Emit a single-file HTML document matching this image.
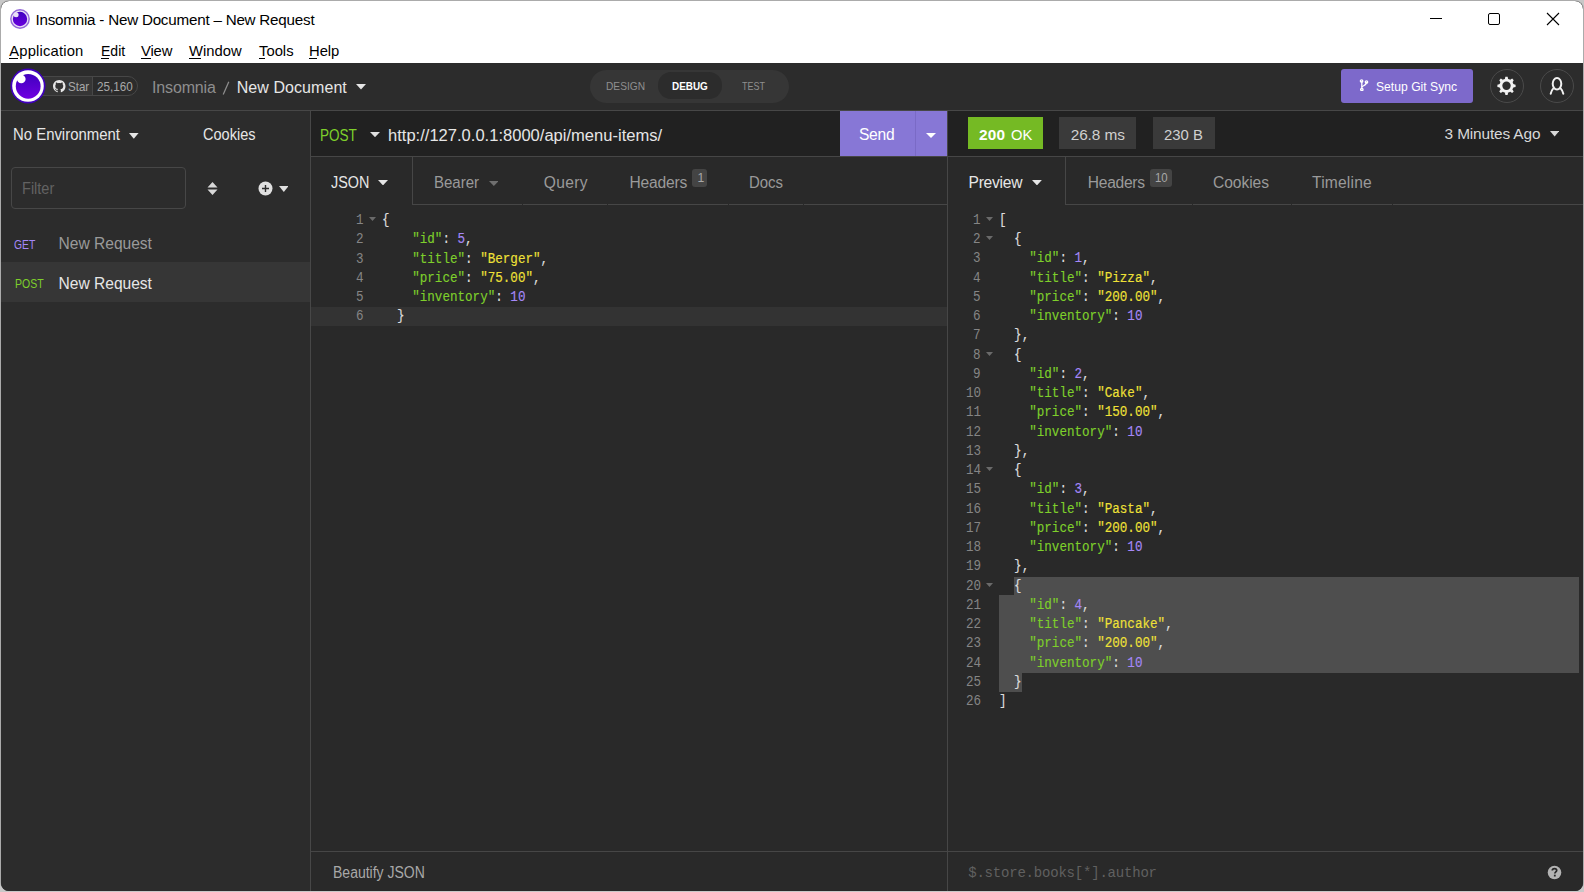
<!DOCTYPE html>
<html><head><meta charset="utf-8">
<style>
*{box-sizing:border-box;margin:0;padding:0}
html,body{width:1584px;height:892px;overflow:hidden;background:#c8c8c8;font-family:"Liberation Sans",sans-serif}
#win{position:absolute;left:0;top:0;width:1584px;height:892px;clip-path:inset(1px 1px 1px 1px round 8px);background:#2c2c2c}
#frame{position:absolute;left:0;top:0;width:1584px;height:891px;background:#ababab;border-radius:9px}
.b{position:absolute}
.t{position:absolute;white-space:pre;line-height:1}
.code{font-family:"Liberation Mono",monospace;font-size:14px;transform:scaleX(0.8987);transform-origin:0 0;color:#ddd;-webkit-text-stroke:0.15px currentColor}
.k{color:#7ecf2b}.s{color:#f0e137}.n{color:#a588f8}.p{color:#dddddd}
</style></head><body>
<div id="frame"></div><div id="win">
<div class="b" style="left:1px;top:1px;width:1582px;height:62px;background:#fff;border-radius:8px 8px 0 0"></div>
<svg class="b" style="left:10px;top:9px" width="20" height="20" viewBox="0 0 20 20">
<defs><linearGradient id="lg1" x1="0" y1="0" x2="0" y2="1"><stop offset="0" stop-color="#4000c0"/><stop offset="1" stop-color="#6a00dd"/></linearGradient></defs>
<circle cx="10" cy="10" r="9.9" fill="#9468d8"/><circle cx="10" cy="10" r="8.5" fill="#e9dff6"/><circle cx="10" cy="10" r="7.2" fill="url(#lg1)"/><circle cx="6.1" cy="5.7" r="2.5" fill="#e9dff6"/></svg>
<div class="t" style="left:35.40px;top:12.00px;font-size:15.2px;color:#000;letter-spacing:-0.215px;font-family:'Liberation Sans',sans-serif;">Insomnia - New Document – New Request</div>
<div class="t" style="left:9.30px;top:44.00px;font-size:14.8px;color:#000;letter-spacing:0.160px;font-family:'Liberation Sans',sans-serif;">Application</div>
<div class="t" style="left:100.50px;top:44.00px;font-size:14.8px;color:#000;transform:scaleX(0.9489);transform-origin:0 0;font-family:'Liberation Sans',sans-serif;">Edit</div>
<div class="t" style="left:141.00px;top:44.00px;font-size:14.8px;color:#000;letter-spacing:-0.149px;font-family:'Liberation Sans',sans-serif;">View</div>
<div class="t" style="left:189.00px;top:44.00px;font-size:14.8px;color:#000;font-family:'Liberation Sans',sans-serif;">Window</div>
<div class="t" style="left:259.00px;top:44.00px;font-size:14.8px;color:#000;font-family:'Liberation Sans',sans-serif;">Tools</div>
<div class="t" style="left:309.00px;top:44.00px;font-size:14.8px;color:#000;letter-spacing:-0.046px;font-family:'Liberation Sans',sans-serif;">Help</div>
<div class="b" style="left:9.3px;top:58px;width:8.5px;height:1px;background:#000;"></div>
<div class="b" style="left:100.5px;top:58px;width:8.3px;height:1px;background:#000;"></div>
<div class="b" style="left:141px;top:58px;width:9.9px;height:1px;background:#000;"></div>
<div class="b" style="left:189px;top:58px;width:12px;height:1px;background:#000;"></div>
<div class="b" style="left:259px;top:58px;width:6px;height:1px;background:#000;"></div>
<div class="b" style="left:309px;top:58px;width:7.6px;height:1px;background:#000;"></div>
<div class="b" style="left:1430px;top:18px;width:12px;height:1px;background:#000;"></div>
<div class="b" style="left:1488px;top:13px;width:12px;height:12px;background:transparent;border:1px solid #000;border-radius:2px"></div>
<svg class="b" style="left:1546px;top:12px" width="14" height="14" viewBox="0 0 14 14"><path d="M1 1L13 13M13 1L1 13" stroke="#000" stroke-width="1.1"/></svg>
<div class="b" style="left:0px;top:63px;width:1584px;height:48px;background:#2c2c2c;border-bottom:1px solid #474747"></div>
<div class="b" style="left:40px;top:76px;width:98px;height:20px;background:#2b2b2b;border:1px solid #474747;border-radius:0 10px 10px 0"></div>
<div class="b" style="left:41px;top:77px;width:52px;height:18px;background:#353535;"></div>
<div class="b" style="left:92px;top:77px;width:1px;height:18px;background:#474747;"></div>
<svg class="b" style="left:53px;top:80px" width="12.5" height="12.5" viewBox="0 0 16 16"><path fill="#e8e8e8" d="M8 0C3.58 0 0 3.58 0 8c0 3.54 2.29 6.53 5.47 7.59.4.07.55-.17.55-.38 0-.19-.01-.82-.01-1.49-2.01.37-2.53-.49-2.69-.94-.09-.23-.48-.94-.82-1.13-.28-.15-.68-.52-.01-.53.63-.01 1.08.58 1.23.82.72 1.21 1.87.87 2.33.66.07-.52.28-.87.51-1.07-1.78-.2-3.64-.89-3.640-3.95 0-.87.31-1.59.82-2.15-.08-.2-.36-1.02.08-2.12 0 0 .67-.21 2.2.82.64-.18 1.32-.27 2-.27.68 0 1.36.09 2 .27 1.53-1.04 2.2-.82 2.2-.82.44 1.1.16 1.92.08 2.12.51.56.82 1.27.82 2.15 0 3.07-1.87 3.75-3.65 3.95.29.25.54.73.54 1.48 0 1.07-.01 1.93-.01 2.2 0 .21.15.46.55.38A8.013 8.013 0 0016 8c0-4.42-3.58-8-8-8z"/></svg>
<div class="t" style="left:68.40px;top:81.00px;font-size:12.8px;color:#a8a8a8;transform:scaleX(0.9031);transform-origin:0 0;font-family:'Liberation Sans',sans-serif;">Star</div>
<div class="t" style="left:97.00px;top:81.00px;font-size:12.8px;color:#a8a8a8;transform:scaleX(0.9144);transform-origin:0 0;font-family:'Liberation Sans',sans-serif;">25,160</div>
<svg class="b" style="left:10px;top:68px" width="36" height="36" viewBox="0 0 36 36">
<defs><linearGradient id="lg2" x1="0" y1="0" x2="0" y2="1"><stop offset="0" stop-color="#4000bf"/><stop offset="1" stop-color="#7000e0"/></linearGradient></defs>
<circle cx="18" cy="18" r="17.5" fill="#4000bf"/><circle cx="18" cy="18" r="15.8" fill="#fff"/><circle cx="18.2" cy="18.3" r="12.4" fill="url(#lg2)"/><circle cx="11.3" cy="11" r="4.3" fill="#fff"/></svg>
<div class="t" style="left:152.10px;top:80.00px;font-size:16px;color:#8e8e8e;letter-spacing:-0.175px;font-family:'Liberation Sans',sans-serif;">Insomnia</div>
<svg class="b" style="left:220px;top:80px" width="12" height="17" viewBox="0 0 12 17"><path d="M8.8 1.8L3.2 14.6" stroke="#8e8e8e" stroke-width="1.25"/></svg>
<div class="t" style="left:236.70px;top:80.00px;font-size:16px;color:#e6e6e6;letter-spacing:0.066px;font-family:'Liberation Sans',sans-serif;">New Document</div>
<svg class="b" style="left:356px;top:84px" width="10" height="5.5" viewBox="0 0 10 5.5"><path d="M0 0H10L5.0 5.5Z" fill="#e6e6e6"/></svg>
<div class="b" style="left:590px;top:69.5px;width:199px;height:33px;background:#363636;border-radius:17px"></div>
<div class="b" style="left:657.5px;top:72.3px;width:64px;height:26.3px;background:#2c2c2c;border-radius:13px"></div>
<div class="t" style="left:605.60px;top:81.00px;font-size:11.8px;color:#8f8f8f;transform:scaleX(0.8620);transform-origin:0 0;font-family:'Liberation Sans',sans-serif;">DESIGN</div>
<div class="t" style="left:671.70px;top:81.00px;font-size:11.8px;color:#ffffff;font-weight:bold;transform:scaleX(0.8401);transform-origin:0 0;font-family:'Liberation Sans',sans-serif;">DEBUG</div>
<div class="t" style="left:742.30px;top:81.00px;font-size:11.8px;color:#8f8f8f;transform:scaleX(0.7627);transform-origin:0 0;font-family:'Liberation Sans',sans-serif;">TEST</div>
<div class="b" style="left:1340.5px;top:69px;width:132.5px;height:34px;background:#7d69cb;border-radius:3px"></div>
<svg class="b" style="left:1359px;top:79px" width="10" height="12" viewBox="0 0 10 12"><g fill="none" stroke="#fff" stroke-width="1.3"><path d="M2.8 2V10.5"/><path d="M7.5 3C7.6 6.5 4 6.5 2.9 8"/><circle cx="2.6" cy="2" r="1.2"/><circle cx="7.5" cy="3" r="1.2"/><circle cx="2.8" cy="10.5" r="1.2"/></g></svg>
<div class="t" style="left:1375.90px;top:80.00px;font-size:13.6px;color:#ffffff;transform:scaleX(0.8940);transform-origin:0 0;font-family:'Liberation Sans',sans-serif;">Setup Git Sync</div>
<div class="b" style="left:1490px;top:69px;width:34px;height:34px;background:transparent;border:1px solid #4a4a4a;border-radius:50%"></div>
<div class="b" style="left:1540px;top:69px;width:34px;height:34px;background:transparent;border:1px solid #4a4a4a;border-radius:50%"></div>
<svg class="b" style="left:1496px;top:76px" width="21" height="20" viewBox="-10.5 -9.8 21 20"><g fill="#f2f2f2"><circle r="7.1"/><path d="M-1.7 -6.5L-1.1 -9.1H1.1L1.7 -6.5Z" transform="rotate(0)"/><path d="M-1.7 -6.5L-1.1 -9.1H1.1L1.7 -6.5Z" transform="rotate(45)"/><path d="M-1.7 -6.5L-1.1 -9.1H1.1L1.7 -6.5Z" transform="rotate(90)"/><path d="M-1.7 -6.5L-1.1 -9.1H1.1L1.7 -6.5Z" transform="rotate(135)"/><path d="M-1.7 -6.5L-1.1 -9.1H1.1L1.7 -6.5Z" transform="rotate(180)"/><path d="M-1.7 -6.5L-1.1 -9.1H1.1L1.7 -6.5Z" transform="rotate(225)"/><path d="M-1.7 -6.5L-1.1 -9.1H1.1L1.7 -6.5Z" transform="rotate(270)"/><path d="M-1.7 -6.5L-1.1 -9.1H1.1L1.7 -6.5Z" transform="rotate(315)"/></g><circle r="4.2" fill="#2c2c2c"/></svg>
<svg class="b" style="left:1547px;top:76px" width="20" height="20" viewBox="0 0 20 20"><g fill="none" stroke="#f2f2f2" stroke-width="2" stroke-linecap="round"><ellipse cx="10" cy="7.8" rx="4.3" ry="5.7"/><path d="M6.2 12.6C4.8 14 4.1 15.8 3.7 17.7M13.8 12.6C15.2 14 15.9 15.8 16.3 17.7"/></g></svg>
<div class="b" style="left:0px;top:111px;width:311px;height:781px;background:#2c2c2c;border-right:1px solid #474747"></div>
<div class="t" style="left:13.10px;top:127.00px;font-size:15.6px;color:#e6e6e6;transform:scaleX(0.9557);transform-origin:0 0;font-family:'Liberation Sans',sans-serif;">No Environment</div>
<svg class="b" style="left:129px;top:133px" width="9.6" height="5.8" viewBox="0 0 9.6 5.8"><path d="M0 0H9.6L4.8 5.8Z" fill="#e6e6e6"/></svg>
<div class="t" style="left:202.50px;top:127.00px;font-size:15.6px;color:#e6e6e6;transform:scaleX(0.9315);transform-origin:0 0;font-family:'Liberation Sans',sans-serif;">Cookies</div>
<div class="b" style="left:11px;top:167px;width:175px;height:42px;background:transparent;border:1px solid #474747;border-radius:4px"></div>
<div class="t" style="left:22.20px;top:181.00px;font-size:15.6px;color:#626262;transform:scaleX(0.9318);transform-origin:0 0;font-family:'Liberation Sans',sans-serif;">Filter</div>
<svg class="b" style="left:207px;top:181px" width="11" height="15" viewBox="0 0 11 15"><path d="M5.5 1L10.5 6.5H0.5Z M0.5 8.5H10.5L5.5 14Z" fill="#d8d8d8"/></svg>
<svg class="b" style="left:258px;top:181px" width="15" height="15" viewBox="0 0 15 15"><circle cx="7.5" cy="7.5" r="7" fill="#e0e0e0"/><path d="M7.5 4V11M4 7.5H11" stroke="#2c2c2c" stroke-width="1.4"/></svg>
<svg class="b" style="left:278.6px;top:186px" width="9.6" height="5.9" viewBox="0 0 9.6 5.9"><path d="M0 0H9.6L4.8 5.9Z" fill="#e0e0e0"/></svg>
<div class="t" style="left:14.10px;top:239.00px;font-size:12.6px;color:#a588f8;transform:scaleX(0.8224);transform-origin:0 0;font-family:'Liberation Sans',sans-serif;">GET</div>
<div class="t" style="left:58.60px;top:236.00px;font-size:15.6px;color:#9a9a9a;letter-spacing:-0.025px;font-family:'Liberation Sans',sans-serif;">New Request</div>
<div class="b" style="left:0px;top:262px;width:310px;height:40px;background:#363636;"></div>
<div class="t" style="left:14.60px;top:278.00px;font-size:12.6px;color:#7ecf2b;transform:scaleX(0.8337);transform-origin:0 0;font-family:'Liberation Sans',sans-serif;">POST</div>
<div class="t" style="left:58.60px;top:276.00px;font-size:15.6px;color:#e6e6e6;letter-spacing:-0.025px;font-family:'Liberation Sans',sans-serif;">New Request</div>
<div class="b" style="left:311px;top:111px;width:636px;height:781px;background:#292929;"></div>
<div class="b" style="left:311px;top:111px;width:636px;height:46px;background:#212121;border-bottom:1px solid #464646"></div>
<div class="t" style="left:320.10px;top:128.00px;font-size:15.6px;color:#7ecf2b;transform:scaleX(0.8688);transform-origin:0 0;font-family:'Liberation Sans',sans-serif;">POST</div>
<svg class="b" style="left:370px;top:132.2px" width="10" height="5.2" viewBox="0 0 10 5.2"><path d="M0 0H10L5.0 5.2Z" fill="#e0e0e0"/></svg>
<div class="t" style="left:388.30px;top:128.00px;font-size:15.6px;color:#e6e6e6;transform:scaleX(1.0610);transform-origin:0 0;font-family:'Liberation Sans',sans-serif;">http://127.0.0.1:8000/api/menu-items/</div>
<div class="b" style="left:840px;top:111px;width:107px;height:45px;background:#8777d6;"></div>
<div class="t" style="left:859.00px;top:127.00px;font-size:15.6px;color:#ffffff;letter-spacing:-0.278px;font-family:'Liberation Sans',sans-serif;">Send</div>
<div class="b" style="left:915px;top:111px;width:1px;height:45px;background:#7a6ac6;"></div>
<svg class="b" style="left:926px;top:132.5px" width="10" height="5" viewBox="0 0 10 5"><path d="M0 0H10L5.0 5Z" fill="#ffffff"/></svg>
<div class="b" style="left:412px;top:157px;width:1px;height:48px;background:#464646;"></div>
<div class="b" style="left:412px;top:204px;width:535px;height:1px;background:#464646;"></div>
<div class="b" style="left:522px;top:204px;width:1px;height:1px;background:#292929;"></div>
<div class="b" style="left:607px;top:204px;width:1px;height:1px;background:#292929;"></div>
<div class="b" style="left:728px;top:204px;width:1px;height:1px;background:#292929;"></div>
<div class="b" style="left:803px;top:204px;width:1px;height:1px;background:#292929;"></div>
<div class="t" style="left:330.60px;top:175.00px;font-size:15.6px;color:#e6e6e6;transform:scaleX(0.9230);transform-origin:0 0;font-family:'Liberation Sans',sans-serif;">JSON</div>
<svg class="b" style="left:378px;top:180px" width="10" height="5.4" viewBox="0 0 10 5.4"><path d="M0 0H10L5.0 5.4Z" fill="#e6e6e6"/></svg>
<div class="t" style="left:434.30px;top:175.00px;font-size:15.6px;color:#9a9a9a;transform:scaleX(0.9632);transform-origin:0 0;font-family:'Liberation Sans',sans-serif;">Bearer</div>
<svg class="b" style="left:488.5px;top:180.5px" width="9.7" height="5" viewBox="0 0 9.7 5"><path d="M0 0H9.7L4.85 5Z" fill="#6f6f6f"/></svg>
<div class="t" style="left:543.75px;top:175.00px;font-size:15.6px;color:#9a9a9a;letter-spacing:0.317px;font-family:'Liberation Sans',sans-serif;">Query</div>
<div class="t" style="left:629.40px;top:175.00px;font-size:15.6px;color:#9a9a9a;letter-spacing:-0.177px;font-family:'Liberation Sans',sans-serif;">Headers</div>
<div class="b" style="left:692px;top:169px;width:15px;height:18px;background:#444;border-radius:3px"></div>
<div class="t" style="left:697.50px;top:172.00px;font-size:12.2px;color:#a8a8a8;font-family:'Liberation Sans',sans-serif;">1</div>
<div class="t" style="left:749.10px;top:175.00px;font-size:15.6px;color:#9a9a9a;transform:scaleX(0.9594);transform-origin:0 0;font-family:'Liberation Sans',sans-serif;">Docs</div>
<div class="b" style="left:311px;top:851px;width:636px;height:1px;background:#464646;"></div>
<div class="t" style="left:332.50px;top:865.00px;font-size:15.6px;color:#a8a8a8;transform:scaleX(0.8983);transform-origin:0 0;font-family:'Liberation Sans',sans-serif;">Beautify JSON</div>
<div class="b" style="left:947px;top:111px;width:637px;height:781px;background:#292929;border-left:1px solid #464646"></div>
<div class="b" style="left:948px;top:111px;width:636px;height:46px;background:#212121;border-bottom:1px solid #464646"></div>
<div class="b" style="left:968px;top:117px;width:75px;height:32px;background:#75ba24;"></div>
<div class="t" style="left:979.10px;top:127.00px;font-size:15.4px;color:#ffffff;font-weight:bold;letter-spacing:0.153px;font-family:'Liberation Sans',sans-serif;">200</div>
<div class="t" style="left:1010.60px;top:127.00px;font-size:15.4px;color:#ffffff;transform:scaleX(0.9573);transform-origin:0 0;font-family:'Liberation Sans',sans-serif;">OK</div>
<div class="b" style="left:1059px;top:117px;width:77px;height:32px;background:#3a3a3a;"></div>
<div class="t" style="left:1070.70px;top:127.00px;font-size:15.4px;color:#d0d0d0;letter-spacing:-0.097px;font-family:'Liberation Sans',sans-serif;">26.8 ms</div>
<div class="b" style="left:1153px;top:117px;width:62px;height:32px;background:#3a3a3a;"></div>
<div class="t" style="left:1163.90px;top:127.00px;font-size:15.4px;color:#d0d0d0;transform:scaleX(0.9666);transform-origin:0 0;font-family:'Liberation Sans',sans-serif;">230 B</div>
<div class="t" style="left:1444.60px;top:126.00px;font-size:15.4px;color:#d8d8d8;letter-spacing:-0.141px;font-family:'Liberation Sans',sans-serif;">3 Minutes Ago</div>
<svg class="b" style="left:1549.8px;top:131.1px" width="9.3" height="5.5" viewBox="0 0 9.3 5.5"><path d="M0 0H9.3L4.65 5.5Z" fill="#d8d8d8"/></svg>
<div class="b" style="left:1065px;top:157px;width:1px;height:48px;background:#464646;"></div>
<div class="b" style="left:1065px;top:204px;width:519px;height:1px;background:#464646;"></div>
<div class="b" style="left:1192px;top:204px;width:1px;height:1px;background:#292929;"></div>
<div class="b" style="left:1291px;top:204px;width:1px;height:1px;background:#292929;"></div>
<div class="b" style="left:1392px;top:204px;width:1px;height:1px;background:#292929;"></div>
<div class="t" style="left:968.50px;top:175.00px;font-size:15.6px;color:#e6e6e6;letter-spacing:-0.254px;font-family:'Liberation Sans',sans-serif;">Preview</div>
<svg class="b" style="left:1031.9px;top:180px" width="9.9" height="5.4" viewBox="0 0 9.9 5.4"><path d="M0 0H9.9L4.95 5.4Z" fill="#e6e6e6"/></svg>
<div class="t" style="left:1087.80px;top:175.00px;font-size:15.6px;color:#9a9a9a;letter-spacing:-0.277px;font-family:'Liberation Sans',sans-serif;">Headers</div>
<div class="b" style="left:1150px;top:169px;width:21.7px;height:18px;background:#444;border-radius:3px"></div>
<div class="t" style="left:1155.30px;top:172.00px;font-size:12.2px;color:#a8a8a8;transform:scaleX(0.9359);transform-origin:0 0;font-family:'Liberation Sans',sans-serif;">10</div>
<div class="t" style="left:1213.00px;top:175.00px;font-size:15.6px;color:#9a9a9a;letter-spacing:-0.060px;font-family:'Liberation Sans',sans-serif;">Cookies</div>
<div class="t" style="left:1312.00px;top:175.00px;font-size:15.6px;color:#9a9a9a;letter-spacing:0.190px;font-family:'Liberation Sans',sans-serif;">Timeline</div>
<div class="b" style="left:948px;top:851px;width:636px;height:1px;background:#464646;"></div>
<div class="t" style="left:968.20px;top:866.00px;font-size:14px;color:#606060;letter-spacing:-0.201px;font-family:'Liberation Mono',monospace;">$.store.books[*].author</div>
<svg class="b" style="left:1547px;top:865px" width="15" height="15" viewBox="0 0 15 15"><circle cx="7.5" cy="7.5" r="6.8" fill="#b3b3b3"/><path d="M5.3 5.6C5.3 4.2 6.3 3.6 7.5 3.6C8.8 3.6 9.7 4.4 9.7 5.4C9.7 6.8 7.8 6.9 7.8 8.6" fill="none" stroke="#262626" stroke-width="1.7"/><rect x="6.9" y="9.7" width="1.8" height="1.8" fill="#262626"/></svg>
<div class="b" style="left:311px;top:307px;width:636px;height:19px;background:#333333;"></div>
<div class="t code ln" style="left:356.05px;top:213px;color:#858585;-webkit-text-stroke:0">1</div>
<svg class="b" style="left:369px;top:217.1px" width="7" height="4" viewBox="0 0 7 4"><path d="M0 0H7L3.5 4Z" fill="#6a6a6a"/></svg>
<div class="t code" style="left:382.2px;top:213px"><span class="p">{</span></div>
<div class="t code ln" style="left:356.05px;top:232px;color:#858585;-webkit-text-stroke:0">2</div>
<div class="t code" style="left:382.2px;top:232px">    <span class="k">"id"</span><span class="p">:</span> <span class="n">5</span><span class="p">,</span></div>
<div class="t code ln" style="left:356.05px;top:252px;color:#858585;-webkit-text-stroke:0">3</div>
<div class="t code" style="left:382.2px;top:252px">    <span class="k">"title"</span><span class="p">:</span> <span class="s">"Berger"</span><span class="p">,</span></div>
<div class="t code ln" style="left:356.05px;top:271px;color:#858585;-webkit-text-stroke:0">4</div>
<div class="t code" style="left:382.2px;top:271px">    <span class="k">"price"</span><span class="p">:</span> <span class="s">"75.00"</span><span class="p">,</span></div>
<div class="t code ln" style="left:356.05px;top:290px;color:#858585;-webkit-text-stroke:0">5</div>
<div class="t code" style="left:382.2px;top:290px">    <span class="k">"inventory"</span><span class="p">:</span> <span class="n">10</span></div>
<div class="t code ln" style="left:356.05px;top:309px;color:#858585;-webkit-text-stroke:0">6</div>
<div class="t code" style="left:382.2px;top:309px">  <span class="p">}</span></div>
<div class="b" style="left:1013.8px;top:577px;width:565.2px;height:18.2px;background:#4e4e4e;"></div>
<div class="b" style="left:998.7px;top:595.2px;width:580.3px;height:77.7px;background:#4e4e4e;"></div>
<div class="b" style="left:998.7px;top:672.9px;width:23.6px;height:18.9px;background:#4e4e4e;"></div>
<div class="t code ln" style="left:973.45px;top:213px;color:#858585;-webkit-text-stroke:0">1</div>
<svg class="b" style="left:986.4px;top:216.9px" width="7" height="4" viewBox="0 0 7 4"><path d="M0 0H7L3.5 4Z" fill="#6a6a6a"/></svg>
<div class="t code" style="left:998.7px;top:213px"><span class="p">[</span></div>
<div class="t code ln" style="left:973.45px;top:232px;color:#858585;-webkit-text-stroke:0">2</div>
<svg class="b" style="left:986.4px;top:236.15px" width="7" height="4" viewBox="0 0 7 4"><path d="M0 0H7L3.5 4Z" fill="#6a6a6a"/></svg>
<div class="t code" style="left:998.7px;top:232px">  <span class="p">{</span></div>
<div class="t code ln" style="left:973.45px;top:251px;color:#858585;-webkit-text-stroke:0">3</div>
<div class="t code" style="left:998.7px;top:251px">    <span class="k">"id"</span><span class="p">:</span> <span class="n">1</span><span class="p">,</span></div>
<div class="t code ln" style="left:973.45px;top:271px;color:#858585;-webkit-text-stroke:0">4</div>
<div class="t code" style="left:998.7px;top:271px">    <span class="k">"title"</span><span class="p">:</span> <span class="s">"Pizza"</span><span class="p">,</span></div>
<div class="t code ln" style="left:973.45px;top:290px;color:#858585;-webkit-text-stroke:0">5</div>
<div class="t code" style="left:998.7px;top:290px">    <span class="k">"price"</span><span class="p">:</span> <span class="s">"200.00"</span><span class="p">,</span></div>
<div class="t code ln" style="left:973.45px;top:309px;color:#858585;-webkit-text-stroke:0">6</div>
<div class="t code" style="left:998.7px;top:309px">    <span class="k">"inventory"</span><span class="p">:</span> <span class="n">10</span></div>
<div class="t code ln" style="left:973.45px;top:328px;color:#858585;-webkit-text-stroke:0">7</div>
<div class="t code" style="left:998.7px;top:328px">  <span class="p">}</span><span class="p">,</span></div>
<div class="t code ln" style="left:973.45px;top:348px;color:#858585;-webkit-text-stroke:0">8</div>
<svg class="b" style="left:986.4px;top:351.65px" width="7" height="4" viewBox="0 0 7 4"><path d="M0 0H7L3.5 4Z" fill="#6a6a6a"/></svg>
<div class="t code" style="left:998.7px;top:348px">  <span class="p">{</span></div>
<div class="t code ln" style="left:973.45px;top:367px;color:#858585;-webkit-text-stroke:0">9</div>
<div class="t code" style="left:998.7px;top:367px">    <span class="k">"id"</span><span class="p">:</span> <span class="n">2</span><span class="p">,</span></div>
<div class="t code ln" style="left:965.90px;top:386px;color:#858585;-webkit-text-stroke:0">10</div>
<div class="t code" style="left:998.7px;top:386px">    <span class="k">"title"</span><span class="p">:</span> <span class="s">"Cake"</span><span class="p">,</span></div>
<div class="t code ln" style="left:965.90px;top:405px;color:#858585;-webkit-text-stroke:0">11</div>
<div class="t code" style="left:998.7px;top:405px">    <span class="k">"price"</span><span class="p">:</span> <span class="s">"150.00"</span><span class="p">,</span></div>
<div class="t code ln" style="left:965.90px;top:425px;color:#858585;-webkit-text-stroke:0">12</div>
<div class="t code" style="left:998.7px;top:425px">    <span class="k">"inventory"</span><span class="p">:</span> <span class="n">10</span></div>
<div class="t code ln" style="left:965.90px;top:444px;color:#858585;-webkit-text-stroke:0">13</div>
<div class="t code" style="left:998.7px;top:444px">  <span class="p">}</span><span class="p">,</span></div>
<div class="t code ln" style="left:965.90px;top:463px;color:#858585;-webkit-text-stroke:0">14</div>
<svg class="b" style="left:986.4px;top:467.15px" width="7" height="4" viewBox="0 0 7 4"><path d="M0 0H7L3.5 4Z" fill="#6a6a6a"/></svg>
<div class="t code" style="left:998.7px;top:463px">  <span class="p">{</span></div>
<div class="t code ln" style="left:965.90px;top:482px;color:#858585;-webkit-text-stroke:0">15</div>
<div class="t code" style="left:998.7px;top:482px">    <span class="k">"id"</span><span class="p">:</span> <span class="n">3</span><span class="p">,</span></div>
<div class="t code ln" style="left:965.90px;top:502px;color:#858585;-webkit-text-stroke:0">16</div>
<div class="t code" style="left:998.7px;top:502px">    <span class="k">"title"</span><span class="p">:</span> <span class="s">"Pasta"</span><span class="p">,</span></div>
<div class="t code ln" style="left:965.90px;top:521px;color:#858585;-webkit-text-stroke:0">17</div>
<div class="t code" style="left:998.7px;top:521px">    <span class="k">"price"</span><span class="p">:</span> <span class="s">"200.00"</span><span class="p">,</span></div>
<div class="t code ln" style="left:965.90px;top:540px;color:#858585;-webkit-text-stroke:0">18</div>
<div class="t code" style="left:998.7px;top:540px">    <span class="k">"inventory"</span><span class="p">:</span> <span class="n">10</span></div>
<div class="t code ln" style="left:965.90px;top:559px;color:#858585;-webkit-text-stroke:0">19</div>
<div class="t code" style="left:998.7px;top:559px">  <span class="p">}</span><span class="p">,</span></div>
<div class="t code ln" style="left:965.90px;top:579px;color:#858585;-webkit-text-stroke:0">20</div>
<svg class="b" style="left:986.4px;top:582.65px" width="7" height="4" viewBox="0 0 7 4"><path d="M0 0H7L3.5 4Z" fill="#6a6a6a"/></svg>
<div class="t code" style="left:998.7px;top:579px">  <span class="p">{</span></div>
<div class="t code ln" style="left:965.90px;top:598px;color:#858585;-webkit-text-stroke:0">21</div>
<div class="t code" style="left:998.7px;top:598px">    <span class="k">"id"</span><span class="p">:</span> <span class="n">4</span><span class="p">,</span></div>
<div class="t code ln" style="left:965.90px;top:617px;color:#858585;-webkit-text-stroke:0">22</div>
<div class="t code" style="left:998.7px;top:617px">    <span class="k">"title"</span><span class="p">:</span> <span class="s">"Pancake"</span><span class="p">,</span></div>
<div class="t code ln" style="left:965.90px;top:636px;color:#858585;-webkit-text-stroke:0">23</div>
<div class="t code" style="left:998.7px;top:636px">    <span class="k">"price"</span><span class="p">:</span> <span class="s">"200.00"</span><span class="p">,</span></div>
<div class="t code ln" style="left:965.90px;top:656px;color:#858585;-webkit-text-stroke:0">24</div>
<div class="t code" style="left:998.7px;top:656px">    <span class="k">"inventory"</span><span class="p">:</span> <span class="n">10</span></div>
<div class="t code ln" style="left:965.90px;top:675px;color:#858585;-webkit-text-stroke:0">25</div>
<div class="t code" style="left:998.7px;top:675px">  <span class="p">}</span></div>
<div class="t code ln" style="left:965.90px;top:694px;color:#858585;-webkit-text-stroke:0">26</div>
<div class="t code" style="left:998.7px;top:694px"><span class="p">]</span></div>
</div>
</body></html>
